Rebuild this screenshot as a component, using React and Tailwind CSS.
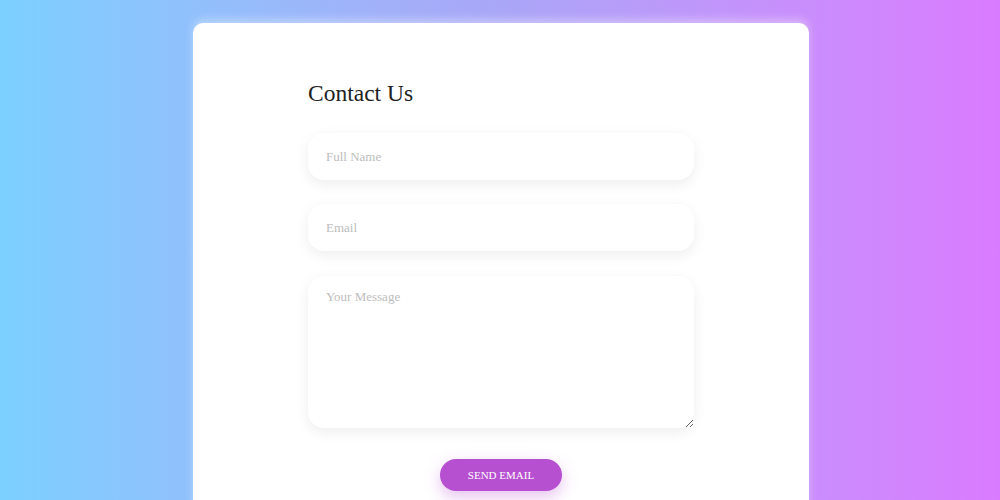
import { useState } from 'react';

const App = () => {
  const [form, setForm] = useState({ name: '', email: '', message: '' });

  const update = (key) => (e) => setForm({ ...form, [key]: e.target.value });

  return (
    <div className="h-screen w-full bg-gradient-to-r from-[#7bd0ff] via-[#a9a6f7] to-[#da7bff] flex justify-center pt-[23px] overflow-hidden font-['Liberation_Serif',serif]">
      <div className="w-[616px] h-[600px] shrink-0 ml-[2px] bg-white rounded-[10px] shadow-[0_-4px_8px_rgba(255,255,255,0.35)] flex justify-center pt-[56px]">
        <form className="w-[386px] flex flex-col" onSubmit={(e) => e.preventDefault()}>
          <h1 className="text-[23.5px] leading-[29px] text-[#222] mb-[25px]">Contact Us</h1>
          <input
            value={form.name}
            onChange={update('name')}
            placeholder="Full Name"
            className="h-[47px] rounded-[16px] px-[18px] text-[13px] text-[#333] placeholder:text-[#bdbdbd] bg-white shadow-[0_4px_14px_rgba(0,0,0,0.07)] outline-none mb-[24px]"
          />
          <input
            value={form.email}
            onChange={update('email')}
            placeholder="Email"
            className="h-[47px] rounded-[16px] px-[18px] text-[13px] text-[#333] placeholder:text-[#bdbdbd] bg-white shadow-[0_4px_14px_rgba(0,0,0,0.07)] outline-none mb-[25px]"
          />
          <textarea
            value={form.message}
            onChange={update('message')}
            placeholder="Your Message"
            className="h-[152px] rounded-[16px] px-[18px] py-[11px] text-[13px] text-[#333] placeholder:text-[#bdbdbd] bg-white shadow-[0_4px_14px_rgba(0,0,0,0.07)] outline-none resize-y mb-[31px]"
          />
          <div className="flex justify-center">
            <button
              type="submit"
              className="w-[122px] h-[32px] rounded-full bg-[#b650d1] text-white text-[11px] uppercase shadow-[0_6px_16px_rgba(182,80,209,0.35)]"
            >
              Send Email
            </button>
          </div>
        </form>
      </div>
    </div>
  );
};

export default App;
